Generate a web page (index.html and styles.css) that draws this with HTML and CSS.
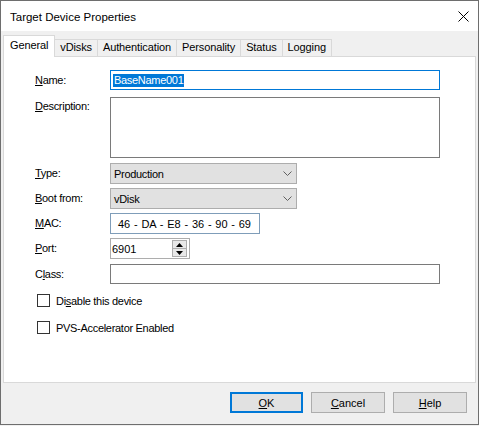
FILE: index.html
```html
<!DOCTYPE html>
<html>
<head>
<meta charset="utf-8">
<link rel="stylesheet" href="styles.css">
</head>
<body>
<div class="dialog">
  <div class="titlebar">
    <span class="title">Target Device Properties</span>
    <span class="close"><svg width="11" height="11" viewBox="0 0 11 11"><path d="M0.5 0.5L10.5 10.5M10.5 0.5L0.5 10.5" stroke="#000" stroke-width="1" fill="none"/></svg></span>
  </div>
  <div class="body">
    <div class="tabs">
      <div class="tab selected">General</div>
      <div class="tab">vDisks</div>
      <div class="tab">Authentication</div>
      <div class="tab">Personality</div>
      <div class="tab">Status</div>
      <div class="tab">Logging</div>
    </div>
    <div class="panel">
      <div class="row r-name">
        <div class="label"><u>N</u>ame:</div>
        <div class="field input focus"><span class="sel">BaseName001</span></div>
      </div>
      <div class="row r-desc">
        <div class="label label-top"><u>D</u>escription:</div>
        <div class="field input textarea"></div>
      </div>
      <div class="row r-type">
        <div class="label"><u>T</u>ype:</div>
        <div class="field combo"><span class="txt">Production</span><svg class="chev" width="9" height="5" viewBox="0 0 9 5"><path d="M0.5 0.5L4.5 4.5L8.5 0.5" stroke="#606060" fill="none"/></svg></div>
      </div>
      <div class="row r-boot">
        <div class="label"><u>B</u>oot from:</div>
        <div class="field combo"><span class="txt">vDisk</span><svg class="chev" width="9" height="5" viewBox="0 0 9 5"><path d="M0.5 0.5L4.5 4.5L8.5 0.5" stroke="#606060" fill="none"/></svg></div>
      </div>
      <div class="row r-mac">
        <div class="label"><u>M</u>AC:</div>
        <div class="field input mac">46 - DA - E8 - 36 - 90 - 69</div>
      </div>
      <div class="row r-port">
        <div class="label"><u>P</u>ort:</div>
        <div class="field input port"><span>6901</span>
          <div class="spin">
            <div class="spin-btn"><svg width="7" height="4" viewBox="0 0 7 4"><path d="M0 4L3.5 0L7 4Z" fill="#000"/></svg></div>
            <div class="spin-btn"><svg width="7" height="4" viewBox="0 0 7 4"><path d="M0 0L3.5 4L7 0Z" fill="#000"/></svg></div>
          </div>
        </div>
      </div>
      <div class="row r-class">
        <div class="label">C<u>l</u>ass:</div>
        <div class="field input"></div>
      </div>
      <div class="check r-chk1">
        <span class="box"></span><span class="txt">Di<u>s</u>able this device</span>
      </div>
      <div class="check r-chk2">
        <span class="box"></span><span class="txt">PVS-Accelerator Enabled</span>
      </div>
    </div>
    <div class="buttons">
      <div class="btn default"><u>O</u>K</div>
      <div class="btn"><u>C</u>ancel</div>
      <div class="btn"><u>H</u>elp</div>
    </div>
  </div>
</div>
</body>
</html>
```

FILE: styles.css
```css
html, body {
  margin: 0;
  padding: 0;
  background: #f0f0f0;
}
body {
  width: 479px;
  height: 426px;
  font-family: "Liberation Sans", Arial, sans-serif;
  font-size: 11px;
  color: #000;
  overflow: hidden;
}
u {
  text-decoration: underline;
  text-underline-offset: 1px;
}
.dialog {
  box-sizing: border-box;
  width: 479px;
  height: 425px;
  border: 1px solid #6e6e6e;
  background: #f0f0f0;
  display: flex;
  flex-direction: column;
}
.titlebar {
  flex: none;
  height: 30px;
  background: #fff;
  display: flex;
  align-items: center;
  justify-content: space-between;
  padding: 0 9px;
}
.title {
  font-size: 11.5px;
  padding-top: 1px;
}
.close {
  display: flex;
  padding-top: 1px;
}
.body {
  padding: 4px 2px 0 2px;
  display: flex;
  flex-direction: column;
}
.tabs {
  display: flex;
  align-items: flex-end;
  height: 21px;
  position: relative;
  z-index: 2;
}
.tab {
  box-sizing: border-box;
  height: 17px;
  line-height: 15px;
  padding: 0 5px;
  border: 1px solid #d9d9d9;
  border-bottom: none;
  margin-left: -1px;
  background: #f0f0f0;
  letter-spacing: -0.12px;
}
.tab.selected {
  margin-left: 0;
  height: 22px;
  line-height: 18px;
  padding: 0 6px;
  background: #fff;
  margin-bottom: -1px;
  position: relative;
  z-index: 3;
  margin-right: -1px;
}
.tab.selected + .tab {
  margin-left: 0;
}
.panel {
  box-sizing: border-box;
  height: 327px;
  border: 1px solid #d9d9d9;
  background: #fff;
  padding: 13px 0 0 31px;
  display: flex;
  flex-direction: column;
}
.row {
  display: flex;
  align-items: center;
}
.label {
  width: 75px;
  flex: none;
  line-height: 13px;
  letter-spacing: -0.3px;
}
.r-desc {
  align-items: flex-start;
}
.label-top {
  padding-top: 3px;
}
.field {
  box-sizing: border-box;
  display: flex;
  align-items: center;
}
.input {
  background: #fff;
  border: 1px solid #7a7a7a;
  width: 330px;
  height: 20px;
}
.focus {
  border-color: #0078d7;
  padding-left: 2px;
}
.sel {
  background: #0078d7;
  color: #fff;
  line-height: 13px;
  padding: 0 1px;
  letter-spacing: -0.3px;
}
.txt {
  letter-spacing: -0.3px;
}
.textarea {
  height: 61px;
}
.r-desc { margin-top: 7px; }
.r-type { margin-top: 5px; }
.r-boot { margin-top: 4px; }
.r-mac { margin-top: 4px; }
.r-port { margin-top: 4px; }
.r-class { margin-top: 5px; }
.combo {
  width: 187px;
  height: 21px;
  background: #e1e1e1;
  border: 1px solid #adadad;
  padding-left: 3px;
  padding-right: 4px;
  justify-content: space-between;
}
.chev {
  display: block;
}
.mac {
  width: 150px;
  height: 21px;
  border-color: #7f9db9;
  padding-left: 7px;
  word-spacing: 0.7px;
}
.port {
  width: 80px;
  height: 21px;
  border-color: #adadad;
  padding-left: 1px;
  padding-right: 2px;
  justify-content: space-between;
}
.spin {
  box-sizing: border-box;
  width: 15px;
  height: 17px;
  display: flex;
  flex-direction: column;
  border: 1px solid #adadad;
  background: #e8e8e8;
}
.spin-btn {
  flex: 1;
  display: flex;
  align-items: center;
  justify-content: center;
}
.spin-btn + .spin-btn {
  border-top: 1px solid #adadad;
}
.spin-btn svg {
  display: block;
}
.check {
  display: flex;
  align-items: center;
  height: 13px;
  margin-left: 2px;
}
.r-chk1 { margin-top: 10px; }
.r-chk2 { margin-top: 14px; }
.box {
  box-sizing: border-box;
  width: 13px;
  height: 13px;
  border: 1px solid #333;
  background: #fff;
  margin-right: 6px;
  flex: none;
}
.buttons {
  display: flex;
  justify-content: flex-end;
  gap: 8px;
  margin-top: 9px;
  padding-right: 9px;
}
.btn {
  box-sizing: border-box;
  width: 74px;
  height: 21px;
  background: #e1e1e1;
  border: 1px solid #adadad;
  display: flex;
  align-items: center;
  justify-content: center;
}
.btn.default {
  width: 73px;
  border-color: #0078d7;
  box-shadow: inset 0 0 0 1px #0078d7;
}
```
